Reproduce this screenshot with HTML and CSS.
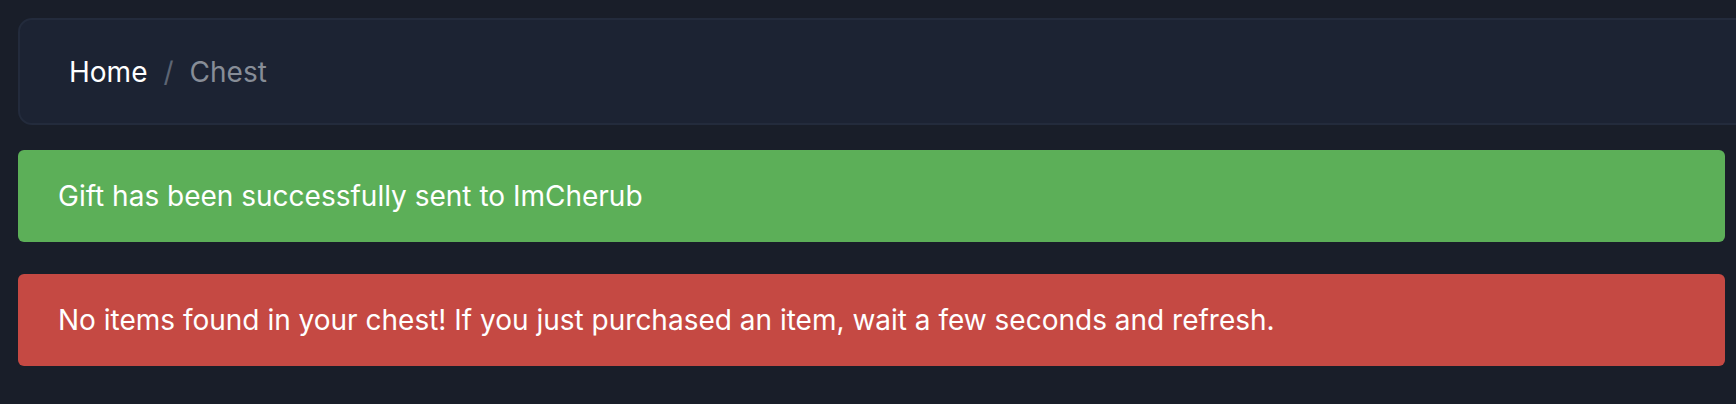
FILE: index.html
```html
<!DOCTYPE html>
<html lang="en">
<head>
  <meta charset="UTF-8">
  <title>Chest</title>
  <link rel="stylesheet" href="styles.css">
</head>
<body>
  <!-- Fil d'Ariane -->
  <nav class="breadcrumb">
    <a class="crumb" href="#">Home</a>
    <span class="sep">/</span>
    <span class="crumb current">Chest</span>
  </nav>

  <!-- Messages -->
  <div class="alert alert-success">Gift has been successfully sent to ImCherub</div>
  <div class="alert alert-danger">No items found in your chest! If you just purchased an item, wait a few seconds and refresh.</div>
</body>
</html>
```

FILE: styles.css
```css
/* Style général */
html, body {
  overflow: hidden;
}
body {
  margin: 0;
  padding: 18px 11px 0 18px;
  background: #191e29;
  font-family: Inter, "Noto Sans", sans-serif;
  color: #fff;
}

/* Fil d'Ariane */
.breadcrumb {
  display: flex;
  align-items: center;
  box-sizing: border-box;
  height: 107px;
  margin-right: -40px;
  padding: 0 49px;
  background: #1c2333;
  border: 2px solid #232b3c;
  border-radius: 14px;
  font-size: 28px;
}
.crumb {
  color: #fff;
  text-decoration: none;
}
.crumb.current {
  color: #878d97;
}
.sep {
  color: #5d6574;
  margin: 0 16px;
}

/* Alertes */
.alert {
  display: flex;
  align-items: center;
  box-sizing: border-box;
  height: 92px;
  padding: 0 40px;
  border-radius: 6px;
  font-size: 28px;
  color: #fff;
}
.alert + .alert {
  margin-top: 32px;
}
.breadcrumb + .alert {
  margin-top: 25px;
}
.alert-success {
  background: #5caf58;
}
.alert-danger {
  background: #c54943;
}
```
